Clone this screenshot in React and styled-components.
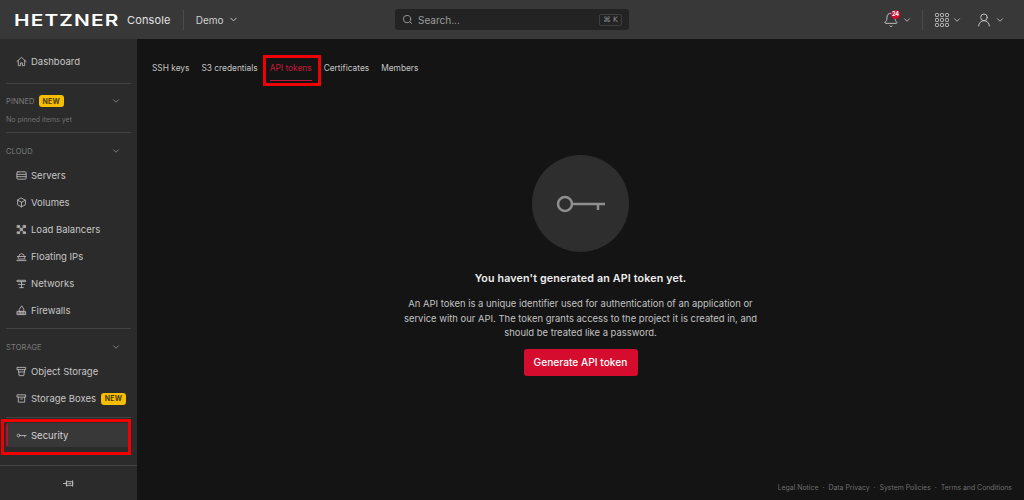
import React from "react";
import styled, { createGlobalStyle } from "styled-components";
import { ChevronDown, Search, Bell, UserRound } from "lucide-react";

const GlobalStyle = createGlobalStyle`
  html, body {
    margin: 0;
    height: 100%;
    background: #141414;
    font-family: Inter, "Liberation Sans", sans-serif;
  }
  * { box-sizing: border-box; }
`;

const Page = styled.div`
  width: 1024px;
  height: 500px;
  display: flex;
  flex-direction: column;
  overflow: hidden;
  background: #141414;
`;

const Header = styled.header`
  height: 39px;
  flex: none;
  display: grid;
  grid-template-columns: 1fr 234px 1fr;
  align-items: center;
  padding: 0 14px;
  background: #383838;
  color: #e6e6e6;
`;

const HeaderLeft = styled.div`
  display: flex;
  align-items: center;
  justify-self: start;
`;

const Logo = styled.span`
  width: 105px;
  font-size: 16px;
  line-height: 1;
  font-weight: 600;
  letter-spacing: 0.9px;
  color: #fff;
  transform: scaleX(1.3);
  transform-origin: left center;
`;

const AppName = styled.span`
  margin-left: 8px;
  font-size: 11px;
  font-weight: 400;
  letter-spacing: 0.15px;
  color: #e2e2e2;
`;

const HeaderRule = styled.span`
  width: 1px;
  height: 20px;
  margin: 0 12px;
  background: #4b4b4b;
`;

const ProjectMenu = styled.span`
  display: flex;
  align-items: center;
  gap: 5px;
  font-size: 10px;
  color: #d0d0d0;
`;

const SearchBox = styled.div`
  height: 21px;
  display: flex;
  align-items: center;
  gap: 5px;
  padding: 0 7px;
  border-radius: 3px;
  background: #232323;
  color: #9c9c9c;
  font-size: 10px;
`;

const SearchLabel = styled.span`
  flex: 1;
`;

const Shortcut = styled.kbd`
  height: 12px;
  padding: 0 3px;
  display: flex;
  align-items: center;
  border: 1px solid #3f3f3f;
  border-radius: 2px;
  font-family: "DejaVu Sans", sans-serif;
  font-size: 7.5px;
  color: #8e8e8e;
`;

const HeaderRight = styled.div`
  display: flex;
  align-items: center;
  justify-self: end;
  padding-right: 5px;
`;

const MenuIcon = styled.span`
  position: relative;
  display: flex;
  align-items: center;
  gap: 3px;
  margin-left: ${(p) => p.$offset || 0}px;
  color: #c8c8c8;
`;

const Counter = styled.span`
  position: absolute;
  top: -2px;
  left: 8px;
  width: 9px;
  height: 9px;
  display: grid;
  place-items: center;
  border-radius: 50%;
  background: #d50c2d;
  color: #fff;
  font-size: 5.5px;
  font-weight: 700;
`;

const RightRule = styled(HeaderRule)`
  margin: 0 12px 0 10px;
`;

const Body = styled.div`
  flex: 1;
  min-height: 0;
  display: flex;
`;

const Sidebar = styled.aside`
  width: 137px;
  flex: none;
  display: flex;
  flex-direction: column;
  padding: 0 6px;
  background: #2b2b2b;
`;

const Section = styled.section`
  display: flex;
  flex-direction: column;
  padding: ${(p) => p.$padding || "0"};
  border-bottom: ${(p) => (p.$last ? "none" : "1px solid #424242")};
`;

const SectionHead = styled.div`
  height: 14px;
  display: flex;
  align-items: center;
  gap: 4px;
  padding-right: 10px;
  margin-bottom: ${(p) => p.$gap || 0}px;
  font-size: 7.5px;
  letter-spacing: 0.1px;
  color: #7c7c7c;
`;

const Chevron = styled(ChevronDown)`
  margin-left: auto;
  color: #8f8f8f;
`;

const NavItem = styled.div`
  position: relative;
  height: 27px;
  display: flex;
  align-items: center;
  gap: 4px;
  padding-left: 10px;
  font-size: 9.5px;
  white-space: nowrap;
  color: #c6c6c6;

  svg {
    flex: none;
    color: #b4b4b4;
  }
`;

const ActiveItem = styled(NavItem)`
  height: 24px;
  border-left: 2px solid #b5122f;
  border-radius: 3px;
  padding-left: 8px;
  background: #383838;
  color: #d4d4d4;

  &::after {
    content: "";
    position: absolute;
    inset: -4px 0 -8px -7px;
    border: 3px solid #f00000;
  }
`;

const NewBadge = styled.span`
  height: 12px;
  width: 25px;
  display: inline-flex;
  align-items: center;
  justify-content: center;
  margin-left: ${(p) => (p.$inline ? 1 : 0)}px;
  border-radius: 3px;
  background: #f7bd00;
  color: #4b3b00;
  font-size: 7px;
  font-weight: 700;
  letter-spacing: 0.2px;
`;

const EmptyNote = styled.div`
  margin-top: 7px;
  font-size: 7px;
  line-height: 9px;
  color: #717171;
`;

const SidebarFoot = styled.div`
  margin: auto -6px 0;
  height: 35px;
  display: grid;
  place-items: center;
  border-top: 1px solid #424242;
`;

const Main = styled.main`
  position: relative;
  flex: 1;
  min-width: 0;
  display: flex;
  flex-direction: column;
`;

const Tabs = styled.nav`
  display: flex;
  gap: 12px;
  padding: 20px 0 0 15px;
`;

const Tab = styled.span`
  position: relative;
  height: 22px;
  padding-top: 4px;
  font-size: 8.35px;
  white-space: nowrap;
  color: ${(p) => (p.$active ? "#c8163a" : "#c4c4c4")};
  border-bottom: ${(p) => (p.$active ? "1px solid #c8163a" : "none")};

  ${(p) =>
    p.$active &&
    `&::after {
      content: "";
      position: absolute;
      inset: -4px -9px -6px -7px;
      border: 3px solid #f00000;
    }`}
`;

const Empty = styled.div`
  flex: 1;
  display: flex;
  flex-direction: column;
  align-items: center;
  padding-top: 74px;
`;

const IconCircle = styled.div`
  width: 97px;
  height: 97px;
  display: grid;
  place-items: center;
  border-radius: 50%;
  background: #2e2e2e;
  color: #8f8f8f;
`;

const Title = styled.h2`
  margin: 20px 0 0;
  font-size: 10.7px;
  line-height: 14px;
  font-weight: 600;
  letter-spacing: 0.15px;
  color: #eeeeee;
`;

const Description = styled.p`
  width: 362px;
  margin: 11px 0 0;
  font-size: 9.45px;
  line-height: 14.5px;
  text-align: center;
  color: #c2c2c2;
`;

const PrimaryButton = styled.button`
  width: 114px;
  height: 27px;
  margin-top: 8px;
  border: none;
  border-radius: 3px;
  background: #d50c2d;
  color: #fff;
  font-family: inherit;
  font-size: 10.2px;
  font-weight: 500;
`;

const Footer = styled.footer`
  position: absolute;
  right: 12px;
  bottom: 8px;
  display: flex;
  gap: 4px;
  font-size: 6.9px;
  color: #6d6d6d;
`;

const ic = {
  width: 11,
  height: 11,
  viewBox: "0 0 24 24",
  fill: "none",
  stroke: "currentColor",
  strokeWidth: 2,
  strokeLinecap: "round",
  strokeLinejoin: "round",
};

const HomeIcon = () => (
  <svg {...ic}>
    <path d="M2 12 12 3l10 9" />
    <path d="M5 10v11h5v-6h4v6h5V10" />
  </svg>
);
const ServersIcon = () => (
  <svg {...ic}>
    <rect x="2" y="4" width="20" height="16" rx="2" />
    <path d="M2 9.500h20M2 14.500h20" />
  </svg>
);
const VolumesIcon = () => (
  <svg {...ic}>
    <path d="M12 2.500 20.500 7v10L12 21.500 3.500 17V7z" />
    <path d="M3.500 7 12 11.500 20.500 7M12 11.500v10" />
  </svg>
);
const BalancerIcon = () => (
  <svg {...ic} fill="currentColor" strokeWidth={1.5}>
    <rect x="3" y="3" width="5" height="5" />
    <rect x="16" y="3" width="5" height="5" />
    <rect x="9.500" y="10" width="5" height="4" />
    <rect x="3" y="17" width="5" height="4" />
    <rect x="16" y="17" width="5" height="4" />
    <path d="M8 7l3 3M16 7l-3 3M8 17l3-3M16 17l-3-3" />
  </svg>
);
const FloatingIcon = () => (
  <svg {...ic}>
    <path d="M6 12a6 6 0 0 1 12 0" />
    <path d="M3 12h18M5 12v3M19 12v3M2 21h20M4 17.500h16" />
  </svg>
);
const NetworksIcon = () => (
  <svg {...ic}>
    <path d="M3 5h18v3H3zM12 8v13M5 14h14M8 21h8" />
  </svg>
);
const FirewallIcon = () => (
  <svg {...ic}>
    <path d="M12 2.500 7 10v4h10v-4z" />
    <path d="M3 14h18v7H3zM9 14v7M15 14v7M3 17.500h18" />
  </svg>
);
const BucketIcon = () => (
  <svg {...ic}>
    <path d="M3 3h18v5H3zM5 8l2 13h10l2-13" />
    <path d="M5.500 13h13" />
  </svg>
);
const BoxIcon = () => (
  <svg {...ic}>
    <path d="M3 4h18v5H3zM5 9v11h14V9M10 13h4" />
  </svg>
);
const SmallKey = () => (
  <svg {...ic}>
    <circle cx="5.500" cy="12" r="3" />
    <path d="M8.500 12H22M19 12v3" />
  </svg>
);
const PinIcon = () => (
  <svg width="11" height="11" viewBox="0 0 24 24" fill="none" stroke="#bdbdbd" strokeWidth="2" strokeLinecap="round">
    <path d="M1 12h7M8 6v12M8 8h13v8H8zM21 6v12M13 12h4" />
  </svg>
);
const AppsIcon = () => (
  <svg width="14" height="14" viewBox="0 0 14 14" fill="none" stroke="currentColor" strokeWidth="1">
    {[0, 5, 10].flatMap((y) =>
      [0, 5, 10].map((x) => <rect key={`${x}-${y}`} x={x + 0.5} y={y + 0.5} width="3" height="3" rx="0.8" />)
    )}
  </svg>
);
const BigKey = () => (
  <svg width="50" height="18" viewBox="0 0 50 18" fill="none" stroke="currentColor" strokeWidth="2.500">
    <circle cx="9" cy="9" r="7" />
    <path d="M16 9h33M42 9v6" />
  </svg>
);

const cloudItems = [
  [ServersIcon, "Servers"],
  [VolumesIcon, "Volumes"],
  [BalancerIcon, "Load Balancers"],
  [FloatingIcon, "Floating IPs"],
  [NetworksIcon, "Networks"],
  [FirewallIcon, "Firewalls"],
];
const tabs = ["SSH keys", "S3 credentials", "API tokens", "Certificates", "Members"];
const footerLinks = ["Legal Notice", "Data Privacy", "System Policies", "Terms and Conditions"];

export default function App() {
  return (
    <Page>
      <GlobalStyle />
      <Header>
        <HeaderLeft>
          <Logo>HETZNER</Logo>
          <AppName>Console</AppName>
          <HeaderRule />
          <ProjectMenu>
            Demo <ChevronDown size={11} />
          </ProjectMenu>
        </HeaderLeft>
        <SearchBox>
          <Search size={11} />
          <SearchLabel>Search...</SearchLabel>
          <Shortcut>⌘ K</Shortcut>
        </SearchBox>
        <HeaderRight>
          <MenuIcon>
            <Bell size={16} strokeWidth={1.4} />
            <Counter>24</Counter>
            <ChevronDown size={10} />
          </MenuIcon>
          <RightRule />
          <MenuIcon>
            <AppsIcon />
            <ChevronDown size={10} />
          </MenuIcon>
          <MenuIcon $offset={14}>
            <UserRound size={16} strokeWidth={1.4} />
            <ChevronDown size={10} />
          </MenuIcon>
        </HeaderRight>
      </Header>
      <Body>
        <Sidebar>
          <Section $padding="9px 0 8px">
            <NavItem>
              <HomeIcon />
              <span>Dashboard</span>
            </NavItem>
          </Section>
          <Section $padding="10px 0 8px">
            <SectionHead>
              PINNED <NewBadge>NEW</NewBadge>
              <Chevron size={10} />
            </SectionHead>
            <EmptyNote>No pinned items yet</EmptyNote>
          </Section>
          <Section $padding="11px 0 4px">
            <SectionHead $gap={4}>
              CLOUD
              <Chevron size={10} />
            </SectionHead>
            {cloudItems.map(([Icon, label]) => (
              <NavItem key={label}>
                <Icon />
                <span>{label}</span>
              </NavItem>
            ))}
          </Section>
          <Section $padding="11px 0 5px">
            <SectionHead $gap={4}>
              STORAGE
              <Chevron size={10} />
            </SectionHead>
            <NavItem>
              <BucketIcon />
              <span>Object Storage</span>
            </NavItem>
            <NavItem>
              <BoxIcon />
              <span>Storage Boxes</span>
              <NewBadge $inline>NEW</NewBadge>
            </NavItem>
          </Section>
          <Section $padding="5px 0 0" $last>
            <ActiveItem>
              <SmallKey />
              <span>Security</span>
            </ActiveItem>
          </Section>
          <SidebarFoot>
            <PinIcon />
          </SidebarFoot>
        </Sidebar>
        <Main>
          <Tabs>
            {tabs.map((t) => (
              <Tab key={t} $active={t === "API tokens"}>
                {t}
              </Tab>
            ))}
          </Tabs>
          <Empty>
            <IconCircle>
              <BigKey />
            </IconCircle>
            <Title>You haven't generated an API token yet.</Title>
            <Description>
              An API token is a unique identifier used for authentication of an application or service with our API.
              The token grants access to the project it is created in, and should be treated like a password.
            </Description>
            <PrimaryButton>Generate API token</PrimaryButton>
          </Empty>
          <Footer>
            {footerLinks.map((l, i) => (
              <React.Fragment key={l}>
                {i > 0 && <span>·</span>}
                <span>{l}</span>
              </React.Fragment>
            ))}
          </Footer>
        </Main>
      </Body>
    </Page>
  );
}
